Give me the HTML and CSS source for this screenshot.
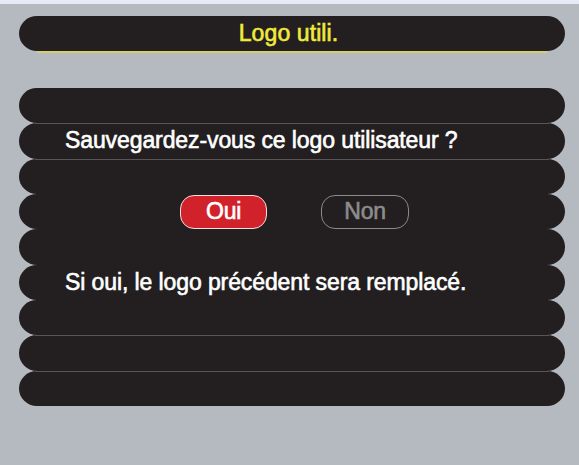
FILE: index.html
```html
<!DOCTYPE html>
<html lang="fr">
<head>
<meta charset="utf-8">
<title>Logo utili.</title>
<link rel="stylesheet" href="styles.css">
</head>
<body>
<div class="top-strip"></div>
<main class="screen">
  <header class="title-bar">Logo utili.</header>
  <div class="title-rule"></div>
  <section class="rows">
    <div class="row"></div>
    <div class="row sep text">Sauvegardez-vous ce logo utilisateur ?</div>
    <div class="row sep"></div>
    <div class="row buttons">
      <span class="btn btn-yes">Oui</span>
      <span class="btn btn-no">Non</span>
    </div>
    <div class="row"></div>
    <div class="row text">Si oui, le logo précédent sera remplacé.</div>
    <div class="row"></div>
    <div class="row sep"></div>
    <div class="row sep"></div>
  </section>
</main>
</body>
</html>
```
FILE: styles.css
```css
html, body {
  margin: 0;
  padding: 0;
}
body {
  background: #b5bac1;
  font-family: "Liberation Sans", Arial, sans-serif;
  width: 579px;
  height: 465px;
  overflow: hidden;
}
.top-strip {
  height: 4px;
  background: #e7e9f7;
}
.screen {
  padding: 12px 14px 0 19px;
}
.title-bar {
  height: 35px;
  background: #231f20;
  border-radius: 18px / 50%;
  display: flex;
  align-items: center;
  justify-content: center;
  padding-right: 7px;
  color: #f2ea3c;
  font-size: 23px;
  letter-spacing: 0.1px;
  -webkit-text-stroke: 0.6px #f2ea3c;
}
.title-rule {
  height: 2px;
  margin: 0 18px;
  background: #d5ce6c;
}
.rows {
  margin-top: 35px;
  display: flex;
  flex-direction: column;
}
.row {
  position: relative;
  height: 35.33px;
  background: #231f20;
  border-radius: 18px / 50%;
  display: flex;
  align-items: center;
  color: #ffffff;
  font-size: 23px;
  letter-spacing: -0.1px;
  -webkit-text-stroke: 0.6px #ffffff;
}
.row.sep::before {
  content: "";
  position: absolute;
  top: 0;
  left: 16px;
  right: 16px;
  height: 1px;
  background: #595556;
}
.row.text {
  padding-left: 46px;
}
.row.buttons {
  padding-left: 161px;
  gap: 54px;
}
.btn {
  box-sizing: border-box;
  height: 34px;
  width: 87px;
  border-radius: 14px;
  display: flex;
  align-items: center;
  justify-content: center;
  font-size: 23px;
  letter-spacing: -0.3px;
}
.btn-yes {
  background: #d1222b;
  border: 1px solid #f3dede;
  color: #ffffff;
  -webkit-text-stroke: 0.6px #ffffff;
}
.btn-no {
  width: 88px;
  border: 1px solid #8a8a8a;
  color: #8c8c8c;
  -webkit-text-stroke: 0.6px #8c8c8c;
}
```
